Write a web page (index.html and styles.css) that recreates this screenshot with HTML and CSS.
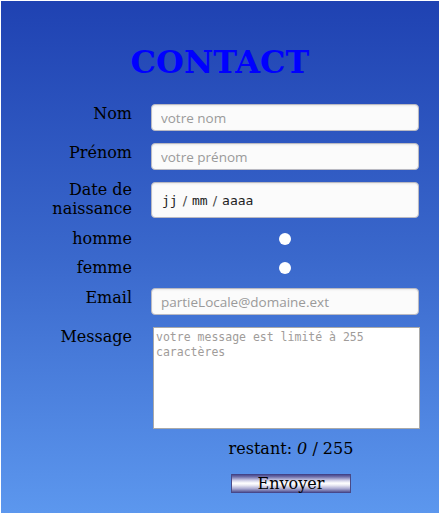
FILE: index.html
```html
<!DOCTYPE html>
<html lang="fr">
<head>
<meta charset="utf-8">
<title>Contact</title>
<link rel="stylesheet" href="styles.css">
</head>
<body>
<div class="page">
  <h1 class="title">CONTACT</h1>
  <form class="form">
    <label class="lbl" for="nom">Nom</label>
    <input class="field" id="nom" type="text" placeholder="votre nom">

    <label class="lbl" for="prenom">Prénom</label>
    <input class="field" id="prenom" type="text" placeholder="votre prénom">

    <label class="lbl lbl-date">Date de naissance</label>
    <div class="field date"><span>jj</span><span class="sep">/</span><span>mm</span><span class="sep">/</span><span>aaaa</span></div>

    <label class="lbl lbl-radio" for="homme">homme</label>
    <div class="radio-cell"><input class="radio" id="homme" type="radio" name="sexe"></div>

    <label class="lbl lbl-radio" for="femme">femme</label>
    <div class="radio-cell"><input class="radio" id="femme" type="radio" name="sexe"></div>

    <label class="lbl" for="email">Email</label>
    <input class="field" id="email" type="email" placeholder="partieLocale@domaine.ext">

    <label class="lbl" for="msg">Message</label>
    <textarea class="message" id="msg" placeholder="votre message est limité à 255 caractères"></textarea>
  </form>
  <div class="bottom">
    <p class="counter">restant: <i>0</i> / 255</p>
    <button class="send" type="button">Envoyer</button>
  </div>
</div>
</body>
</html>
```

FILE: styles.css
```css
html, body {
  margin: 0;
  padding: 0;
  background: #ffffff;
}

.page {
  margin: 1px;
  width: 438px;
  height: 512px;
  box-sizing: border-box;
  padding-top: 43px;
  background: linear-gradient(to bottom, #1f42b2 0%, #3a68cc 50%, #5c97ee 100%);
  font-family: "DejaVu Serif", serif;
  font-size: 16px;
  color: #000;
}

.title {
  margin: 0 0 23px 0;
  font-size: 32px;
  line-height: 37px;
  font-weight: bold;
  color: #0000ff;
  text-align: center;
}

.form {
  display: grid;
  grid-template-columns: 131px 268px;
  column-gap: 19px;
  row-gap: 12px;
}

.lbl {
  text-align: right;
  line-height: 19px;
  align-self: start;
}

.lbl-date {
  margin-top: -2px;
}

.lbl-radio {
  line-height: 17px;
  height: 17px;
}

.field {
  box-sizing: border-box;
  height: 27px;
  width: 268px;
  margin: 0;
  padding: 0 9px;
  border: 1px solid #b9b9c2;
  border-radius: 4px;
  background: #fbfbfb;
  box-shadow: inset 0 1px 2px rgba(0, 0, 0, 0.08);
  font-family: "Open Sans", sans-serif;
  font-size: 13.5px;
  color: #222;
  outline: none;
}

.field::placeholder {
  color: #9a9a9a;
}

.date {
  height: 36px;
  display: flex;
  align-items: center;
  gap: 5px;
  padding-left: 10px;
  font-family: "DejaVu Sans Mono", monospace;
  font-size: 13px;
  color: #222;
}

.date .sep {
  font-family: "DejaVu Sans", sans-serif;
  color: #444;
}

.radio-cell {
  height: 17px;
  display: flex;
  align-items: center;
  justify-content: center;
}

.radio {
  appearance: none;
  -webkit-appearance: none;
  width: 12px;
  height: 12px;
  margin: 0;
  border: none;
  border-radius: 50%;
  background: #ffffff;
}

.message {
  box-sizing: border-box;
  margin: 0 0 0 2px;
  width: 267px;
  height: 102px;
  padding: 2px;
  border: 1px solid #a9a9a9;
  background: #ffffff;
  font-family: "DejaVu Sans Mono", monospace;
  font-size: 11.5px;
  line-height: 15px;
  resize: none;
  outline: none;
}

.message::placeholder {
  color: #a09c9a;
}

.bottom {
  margin-left: 150px;
  width: 280px;
  text-align: center;
}

.counter {
  margin: 10px 0 16px 0;
  line-height: 19px;
}

.send {
  display: inline-block;
  width: 120px;
  height: 19px;
  padding: 0;
  border: none;
  border-left: 1px solid #4a4a86;
  border-right: 1px solid #4a4a86;
  font-family: "DejaVu Serif", serif;
  font-size: 16px;
  line-height: 19px;
  color: #000;
  background: linear-gradient(to bottom, #3a3a80 0%, #7070aa 15%, #c8c8e4 32%, #ffffff 48%, #eeeef6 58%, #a8a8d0 78%, #3a3a80 100%);
}
```
